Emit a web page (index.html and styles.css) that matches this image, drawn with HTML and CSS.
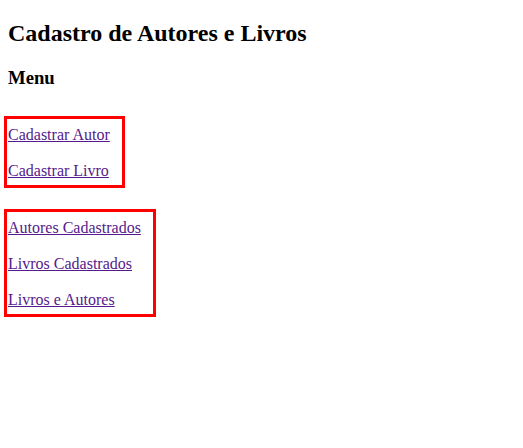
FILE: index.html
```html
<!DOCTYPE html>
<html lang="pt-BR">
<head>
<meta charset="utf-8">
<title>Cadastro de Autores e Livros</title>
<link rel="stylesheet" href="styles.css">
</head>
<body class="page">
<h2 class="title">Cadastro de Autores e Livros</h2>
<h3 class="subtitle">Menu</h3>
<nav class="menu">
  <div class="menu-box">
    <a class="menu-link" href="#cadastrar-autor">Cadastrar Autor</a>
    <a class="menu-link" href="#cadastrar-livro">Cadastrar Livro</a>
  </div>
  <div class="menu-box">
    <a class="menu-link" href="#autores">Autores Cadastrados</a>
    <a class="menu-link" href="#livros">Livros Cadastrados</a>
    <a class="menu-link" href="#livros-autores">Livros e Autores</a>
  </div>
</nav>
</body>
</html>
```
FILE: styles.css
```css
html, body {
  background: #ffffff;
}
.page {
  margin: 0 4px 8px;
  padding: 0;
  font-family: "Liberation Serif", "Times New Roman", serif;
  font-size: 16px;
  color: #000000;
}
.title {
  font-size: 24px;
  font-weight: bold;
  margin: 19.92px 0;
  padding-left: 4px;
}
.subtitle {
  font-size: 18.72px;
  font-weight: bold;
  margin: 18.72px 0;
  padding-left: 4px;
}
.menu {
  margin-top: 27px;
  display: flex;
  flex-direction: column;
  align-items: flex-start;
  gap: 21px;
}
.menu-box {
  border: 3px solid #ff0000;
  padding: 7px 12px 5px 1px;
  display: flex;
  flex-direction: column;
  gap: 18px;
}
.menu-link {
  display: block;
  line-height: 18px;
  color: #551a8b;
  text-decoration: underline;
}
```
